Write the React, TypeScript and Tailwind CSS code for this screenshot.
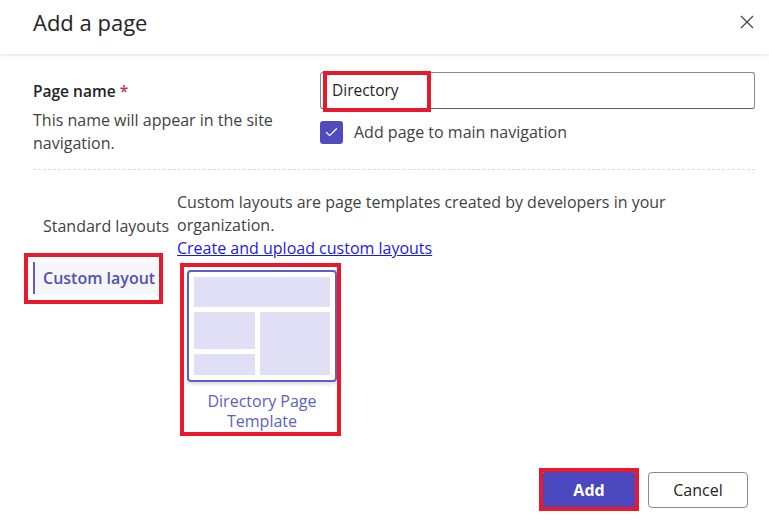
import { Check } from "lucide-react";

const font = { fontFamily: '"Open Sans", "Noto Sans", sans-serif' };

function RedBox({ className }: { className: string }) {
  return <div className={`pointer-events-none absolute border-[4px] border-[#e8192c] ${className}`} />;
}

function TemplateCard() {
  return (
    <div className="relative ml-[10px] mt-[10px] w-[150px]">
      <RedBox className="-left-[7px] -top-[7px] h-[173px] w-[161px]" />
      <div className="rounded-[4px] border-2 border-[#5b5fc7] bg-white p-[5px] shadow-[0_2px_4px_rgba(0,0,0,0.14)]">
        <div className="h-[30px] bg-[#e1dff6]" />
        <div className="mt-[5px] grid grid-cols-[61px_1fr] gap-[5px]">
          <div className="flex flex-col gap-[5px]">
            <div className="h-[37px] bg-[#e1dff6]" />
            <div className="h-[21px] bg-[#e1dff6]" />
          </div>
          <div className="h-[63px] bg-[#e1dff6]" />
        </div>
      </div>
      <div className="-mx-[10px] mt-[9px] text-center text-[16px] font-medium leading-[20px] text-[#5b5fc7]">
        <div>Directory Page</div>
        <div>Template</div>
      </div>
    </div>
  );
}

export default function App() {
  return (
    <div className="flex h-[528px] w-[769px] flex-col overflow-hidden bg-white" style={font}>
      {/* Header */}
      <div className="flex h-[54px] shrink-0 items-center justify-between pb-[10px] pl-[33px] pr-[15px] shadow-[0_1px_3px_rgba(0,0,0,0.12)]">
        <h1 className="text-[22px] leading-[28px] text-[#242424]">Add a page</h1>
        <svg width="14" height="14" viewBox="0 0 14 14" className="text-[#424242]">
          <path d="M1 1L13 13M13 1L1 13" stroke="currentColor" strokeWidth="1.2" />
        </svg>
      </div>

      <div className="pl-[33px] pr-[14px]">
        {/* Page name */}
        <div className="grid grid-cols-[287px_1fr] pt-[18px]">
          <div className="pt-[7px]">
            <div className="text-[15.5px] font-semibold leading-[24px] text-[#242424]">
              Page name <span className="text-[#c4314b]">*</span>
            </div>
            <p className="mt-[6px] text-[16px] leading-[23px] text-[#424242]">
              This name will appear in the site navigation.
            </p>
          </div>
          <div>
            <div className="relative">
              <div className="flex h-[37px] items-center rounded-[3px] border border-[#8a8886] border-b-[#616161] px-[11px] text-[15.5px] text-[#242424]">
                Directory
              </div>
              <RedBox className="-top-[1px] left-[3px] h-[41px] w-[108px]" />
            </div>
            <div className="mt-[11px] flex items-center gap-[11px]">
              <div className="flex h-[23px] w-[23px] items-center justify-center rounded-[3px] bg-[#4f4bbf]">
                <Check className="h-[15px] w-[15px] text-white" strokeWidth={2} />
              </div>
              <span className="text-[16px] text-[#424242]">Add page to main navigation</span>
            </div>
          </div>
        </div>

        <div className="mt-[14px] border-t border-dashed border-[#dcdcdc]" />

        {/* Layouts */}
        <div className="flex pt-[21px]">
          <div className="w-[144px] shrink-0">
            <div className="pl-[10px] pt-[24px] text-[16px] leading-[23px] text-[#424242]">Standard layouts</div>
            <div className="relative mt-[24px] w-[125px]">
              <div className="flex h-[32px] items-center border-l-2 border-[#5b5fc7] bg-[#f5f5fa] pl-[8px] text-[16px] font-semibold text-[#4f52b2]">
                Custom layout
              </div>
              <RedBox className="-left-[9px] -top-[9px] h-[51px] w-[139px]" />
            </div>
          </div>
          <div>
            <p className="text-[16px] leading-[23px] text-[#424242]">
              Custom layouts are page templates created by developers in your
              <br />
              organization.
            </p>
            <a className="block text-[16px] leading-[23px] text-[#1a1ae6] underline">Create and upload custom layouts</a>
            <TemplateCard />
          </div>
        </div>
      </div>

      {/* Footer */}
      <div className="mt-auto flex justify-end gap-[11px] pb-[20px] pr-[21px]">
        <div className="relative">
          <button className="h-[36px] w-[96px] rounded-[4px] bg-[#4b47bd] text-[16px] font-bold text-white">Add</button>
          <RedBox className="-left-[2px] -top-[4px] h-[43px] w-[100px]" />
        </div>
        <button className="h-[36px] w-[100px] rounded-[4px] border border-[#8a8886] bg-white text-[16px] text-[#242424]">
          Cancel
        </button>
      </div>
    </div>
  );
}
